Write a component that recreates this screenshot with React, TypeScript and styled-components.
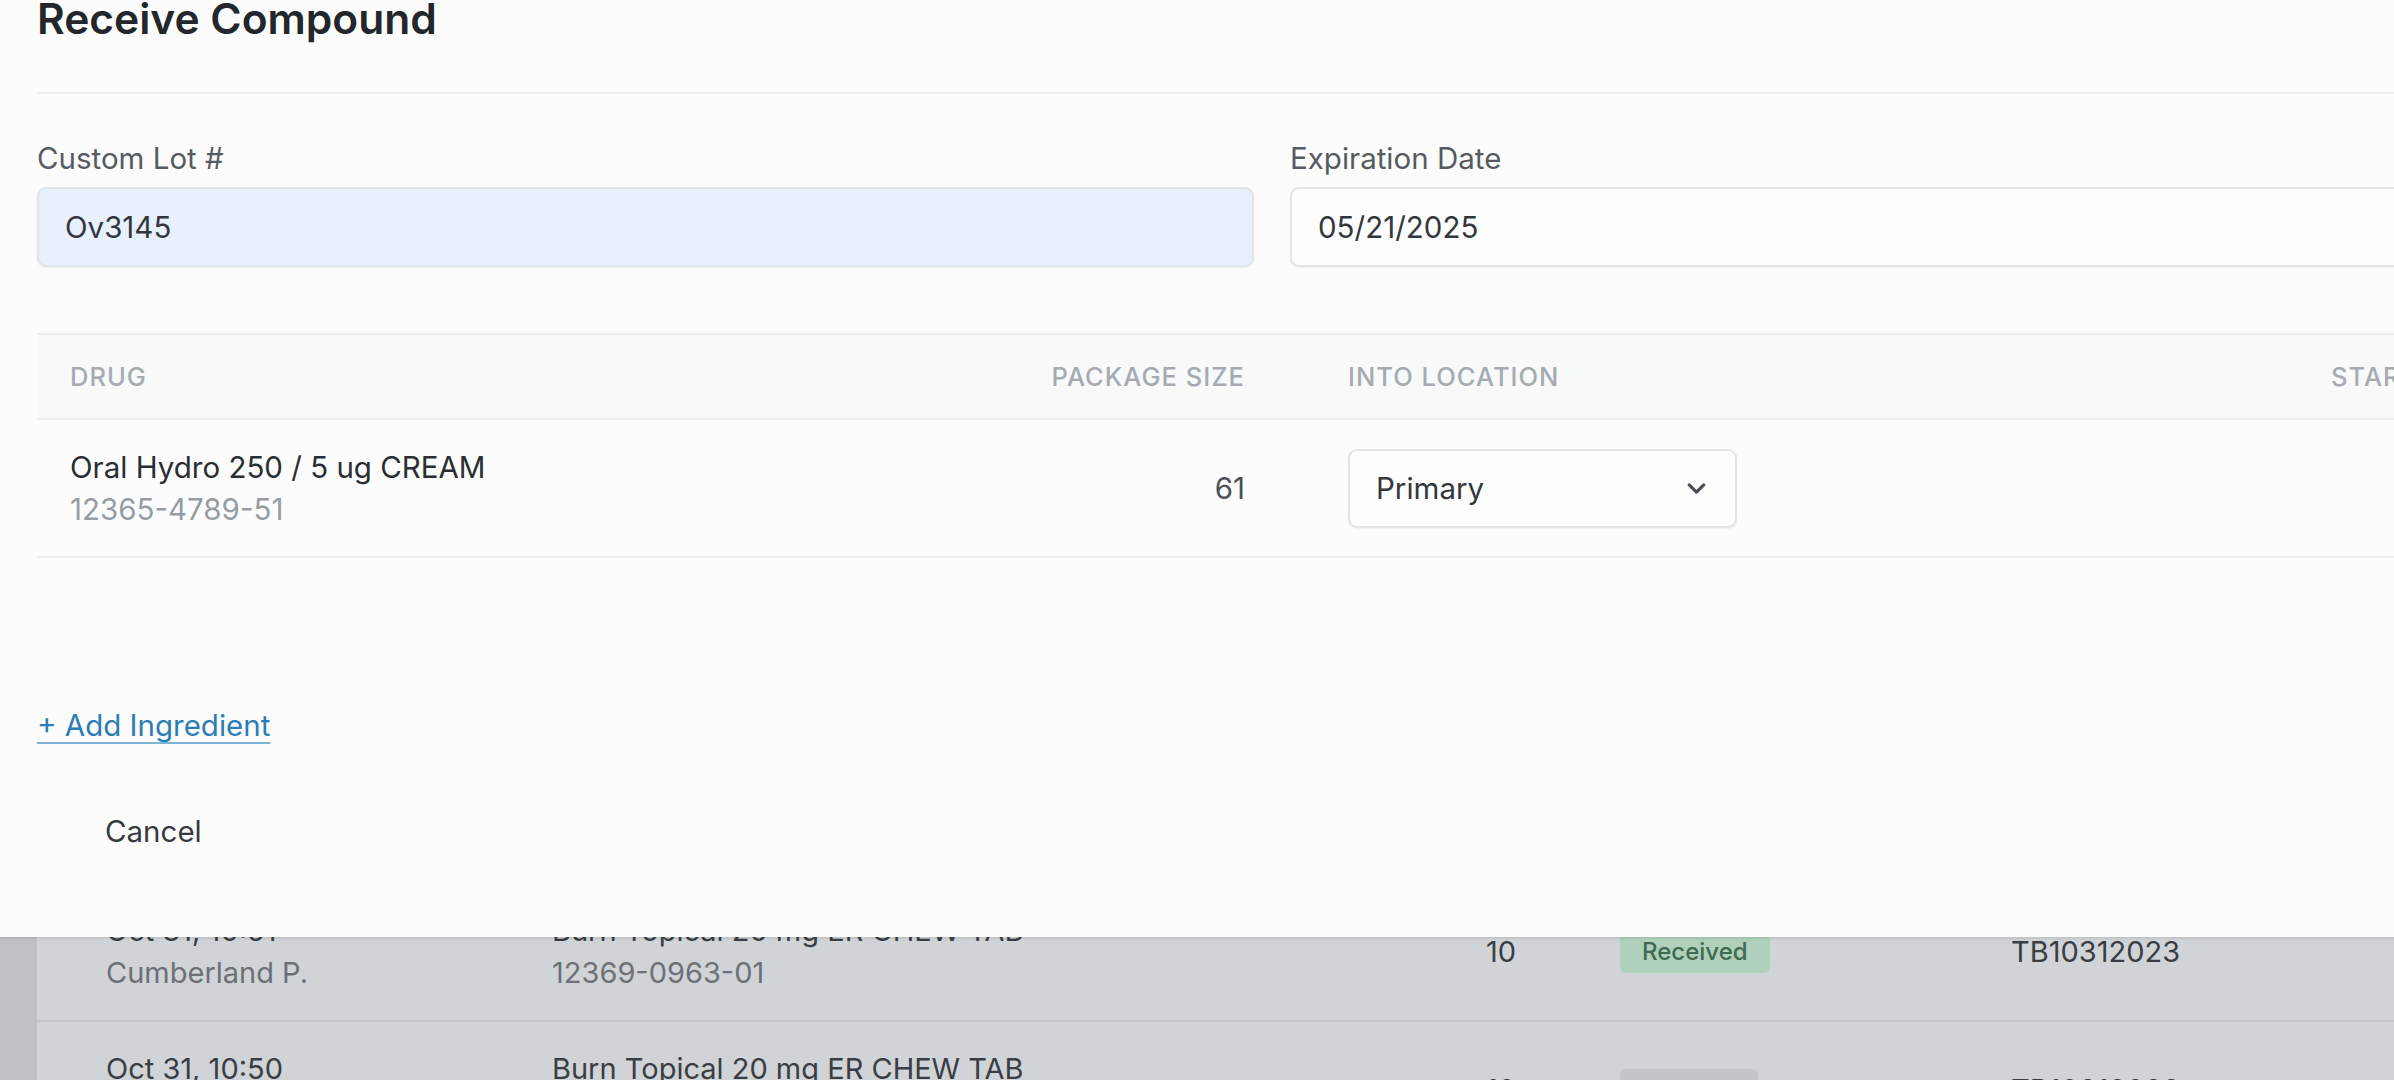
import React from 'react'
import styled, { createGlobalStyle } from 'styled-components'
import { ChevronDown } from 'lucide-react'

const GlobalStyle = createGlobalStyle`
  html, body {
    margin: 0;
    padding: 0;
    overflow: hidden;
    font-family: Inter, "Noto Sans", "Liberation Sans", sans-serif;
  }
  * { box-sizing: border-box; }
`

const history = [
  {
    date: 'Oct 31, 10:51',
    who: 'Cumberland P.',
    drug: 'Burn Topical 20 mg ER CHEW TAB',
    ndc: '12369-0963-01',
    qty: 10,
    status: 'Received',
    lot: 'TB10312023',
  },
  {
    date: 'Oct 31, 10:50',
    who: 'Cumberland P.',
    drug: 'Burn Topical 20 mg ER CHEW TAB',
    ndc: '12369-0963-01',
    qty: 10,
    status: 'Pending',
    lot: 'TB10312023',
  },
]

const App = () => {
  return (
    <>
      <GlobalStyle />
      <Page>
        <Card>
          {history.map((row, i) => (
            <HistoryRow key={i}>
              <Stack>
                <Primary>{row.date}</Primary>
                <Secondary>{row.who}</Secondary>
              </Stack>
              <Stack>
                <Primary>{row.drug}</Primary>
                <Secondary>{row.ndc}</Secondary>
              </Stack>
              <Qty>{row.qty}</Qty>
              <BadgeCell>
                <Badge received={row.status === 'Received'}>{row.status}</Badge>
              </BadgeCell>
              <Primary>{row.lot}</Primary>
            </HistoryRow>
          ))}
        </Card>

        <Modal>
          <Header>
            <Title>Receive Compound</Title>
          </Header>

          <Fields>
            <Field>
              <Label>Custom Lot #</Label>
              <Input autofilled readOnly value="Ov3145" />
            </Field>
            <Field>
              <Label>Expiration Date</Label>
              <Input readOnly value="05/21/2025" />
            </Field>
          </Fields>

          <Table>
            <HeadRow>
              <HeadCell>Drug</HeadCell>
              <HeadCell right>Package Size</HeadCell>
              <HeadCell>Into Location</HeadCell>
              <HeadCell>Starting Quantity</HeadCell>
            </HeadRow>
            <BodyRow>
              <div>
                <DrugName>Oral Hydro 250 / 5 ug CREAM</DrugName>
                <DrugCode>12365-4789-51</DrugCode>
              </div>
              <Size>61</Size>
              <div>
                <Select>
                  <span>Primary</span>
                  <ChevronDown size={29} strokeWidth={2.7} color="#4b5058" />
                </Select>
              </div>
              <div />
            </BodyRow>
          </Table>

          <AddLink href="#">+ Add Ingredient</AddLink>

          <Footer>
            <CancelButton>Cancel</CancelButton>
          </Footer>
        </Modal>
      </Page>
    </>
  )
}

export default App

const Page = styled.div`
  position: relative;
  width: 100%;
  height: 1080px;
  overflow: hidden;
  background: #bdc0c4;
  padding-left: 37px;
`
const Card = styled.div`
  background: #d0d3d7;
  height: 100%;
  padding-top: 884px;
`
const HistoryRow = styled.div`
  display: grid;
  grid-template-columns: 446px 700px 264px 495px 1fr;
  align-items: center;
  height: 138px;
  padding-left: 69px;
  border-bottom: 2px solid #c2c5c9;
`
const Stack = styled.div`
  display: flex;
  flex-direction: column;
`
const Primary = styled.div`
  font-size: 29px;
  line-height: 42px;
  color: #3a3e44;
  white-space: nowrap;
`
const Secondary = styled.div`
  font-size: 29px;
  line-height: 42px;
  color: #6d7177;
`
const Qty = styled.div`
  font-size: 29px;
  line-height: 42px;
  color: #3a3e44;
  text-align: right;
`
const BadgeCell = styled.div`
  padding-left: 104px;
`
const Badge = styled.span<{ received: boolean }>`
  display: inline-block;
  padding: 0 22px;
  height: 42px;
  line-height: 42px;
  border-radius: 6px;
  font-size: 24px;
  font-weight: 500;
  background: ${p => (p.received ? '#afd0bb' : '#c2c5c9')};
  color: ${p => (p.received ? '#3e6b51' : '#5c6066')};
`
const Modal = styled.div`
  position: absolute;
  top: -4px;
  left: 0;
  width: 2544px;
  padding: 0 37px;
  background: #fcfcfc;
  box-shadow: 0 1px 3px rgba(0, 0, 0, 0.12);
`
const Header = styled.div`
  padding-bottom: 50px;
  border-bottom: 2px solid #eceef0;
`
const Title = styled.h2`
  margin: 0;
  font-size: 42.5px;
  line-height: 46px;
  font-weight: 600;
  color: #23272c;
`
const Fields = styled.div`
  display: grid;
  grid-template-columns: 1fr 1fr;
  column-gap: 36px;
  padding-top: 44px;
`
const Field = styled.div`
  display: flex;
  flex-direction: column;
`
const Label = styled.label`
  font-size: 29.5px;
  line-height: 40px;
  color: #565b62;
  margin-bottom: 9px;
`
const Input = styled.input<{ autofilled?: boolean }>`
  height: 80px;
  padding: 0 26px;
  border: 2px solid #e2e4e7;
  border-radius: 9px;
  font-family: inherit;
  font-size: 29.5px;
  color: #33373c;
  background: ${p => (p.autofilled ? '#e8f0fe' : '#fdfdfd')};
  box-shadow: 0 1px 2px rgba(0, 0, 0, 0.06);
  outline: none;
`
const Table = styled.div`
  margin-top: 66px;
`
const HeadRow = styled.div`
  display: grid;
  grid-template-columns: 797px 275px 880px 1fr;
  column-gap: 103px;
  align-items: center;
  height: 87px;
  padding: 0 33px;
  background: #f8f9f9;
  border-top: 2px solid #eceef0;
  border-bottom: 2px solid #eceef0;
`
const HeadCell = styled.div<{ right?: boolean }>`
  font-size: 25.5px;
  font-weight: 500;
  letter-spacing: 0.04em;
  text-transform: uppercase;
  color: #a6abb1;
  white-space: nowrap;
  text-align: ${p => (p.right ? 'right' : 'left')};
`
const BodyRow = styled.div`
  display: grid;
  grid-template-columns: 797px 275px 880px 1fr;
  column-gap: 103px;
  align-items: center;
  height: 138px;
  padding: 0 33px;
  border-bottom: 2px solid #eceef0;
`
const DrugName = styled.div`
  font-size: 29.5px;
  line-height: 42px;
  color: #2a2e33;
`
const DrugCode = styled.div`
  font-size: 29.5px;
  line-height: 42px;
  color: #979ca3;
`
const Size = styled.div`
  font-size: 29.5px;
  color: #4b5058;
  text-align: right;
`
const Select = styled.div`
  display: flex;
  align-items: center;
  justify-content: space-between;
  width: 389px;
  height: 79px;
  padding: 0 24px 0 26px;
  border: 2px solid #e2e4e7;
  border-radius: 9px;
  background: #fdfdfd;
  box-shadow: 0 1px 2px rgba(0, 0, 0, 0.06);
  font-size: 29.5px;
  color: #33373c;
`
const AddLink = styled.a`
  display: inline-block;
  margin-top: 147px;
  font-size: 29.5px;
  line-height: 40px;
  color: #2a7db5;
  text-decoration: underline;
  text-decoration-color: #7fb3d6;
  text-underline-offset: 6px;
  text-decoration-thickness: 2px;
`
const Footer = styled.div`
  padding: 54px 0 74px;
`
const CancelButton = styled.button`
  height: 64px;
  padding: 0 68px;
  border: none;
  background: transparent;
  font-family: inherit;
  font-size: 29.5px;
  color: #363a40;
`
